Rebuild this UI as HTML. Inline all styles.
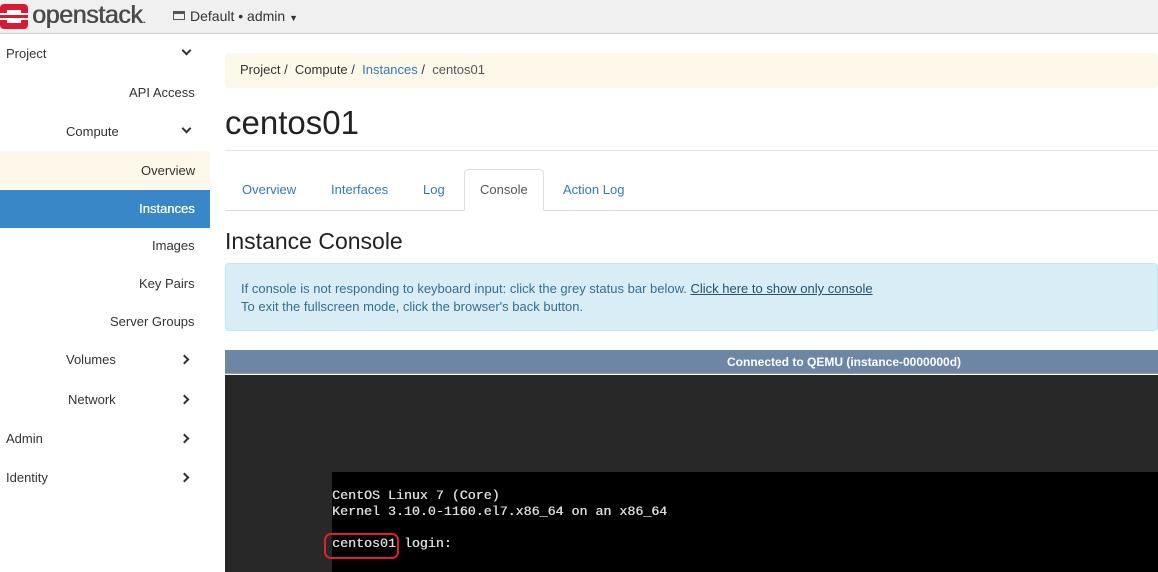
<!DOCTYPE html>
<html><head><style>
*{margin:0;padding:0;box-sizing:border-box}
body{width:1158px;height:572px;overflow:hidden;background:#fff;font-family:"Liberation Sans",sans-serif;font-size:13px;color:#333;position:relative}
.hdr{position:absolute;left:0;top:0;width:1158px;height:34px;background:#f0f0f0;border-bottom:1px solid #ccc}
.abs{position:absolute;white-space:nowrap}
.side .abs{font-size:13px;color:#333}
.chev{position:absolute;width:7px;height:7px;border-right:2px solid #333;border-bottom:2px solid #333}
a{color:#337ab7;text-decoration:none}
.mono{font-family:"Liberation Mono",monospace;font-size:13.3px;color:#dcdcdc;line-height:16px;text-shadow:0.4px 0 0 #dcdcdc}
</style></head><body>
<div class="hdr">
 <svg class="abs" style="left:0;top:3px" width="28" height="26" viewBox="0 0 28 26"><rect x="0" y="1" width="28" height="25" rx="4" fill="#da1a32"/><rect x="7" y="7" width="14" height="13" fill="#fff"/><rect x="0" y="10" width="7" height="2" fill="#fff"/><rect x="0" y="15" width="7" height="2" fill="#fff"/><rect x="21" y="10" width="7" height="2" fill="#fff"/><rect x="21" y="15" width="7" height="2" fill="#fff"/><rect x="7" y="12" width="14" height="3" fill="#da1a32"/></svg>
 <div class="abs" style="left:32px;top:1px;font-size:25px;color:#4a4a4a;letter-spacing:-0.4px;text-shadow:0.6px 0 0 #4a4a4a">openstack<span style="font-size:12px">.</span></div>
 <div class="abs" style="left:173px;top:11px;width:12px;height:9px;border:1.5px solid #555;border-top-width:3px"></div>
 <div class="abs" style="left:190px;top:8px;font-size:14px;color:#333">Default • admin <span style="font-size:9px">▼</span></div>
</div>
<div class="side">
 <div class="abs" style="left:6px;top:46px">Project</div><div class="chev" style="left:183px;top:47px;transform:rotate(45deg)"></div>
 <div class="abs" style="left:129px;top:85px">API Access</div>
 <div class="abs" style="left:66px;top:124px">Compute</div><div class="chev" style="left:183px;top:125px;transform:rotate(45deg)"></div>
 <div class="abs" style="left:0;top:151px;width:210px;height:38px;background:#fdf8ea"></div>
 <div class="abs" style="left:141px;top:163px">Overview</div>
 <div class="abs" style="left:0;top:190px;width:210px;height:38px;background:#3a87c7"></div>
 <div class="abs" style="left:139px;top:201px;color:#fff;text-shadow:0.3px 0 0 #fff">Instances</div>
 <div class="abs" style="left:152px;top:238px">Images</div>
 <div class="abs" style="left:139px;top:276px">Key Pairs</div>
 <div class="abs" style="left:110px;top:314px">Server Groups</div>
 <div class="abs" style="left:66px;top:352px">Volumes</div><div class="chev" style="left:181px;top:356px;transform:rotate(-45deg)"></div>
 <div class="abs" style="left:68px;top:392px">Network</div><div class="chev" style="left:181px;top:396px;transform:rotate(-45deg)"></div>
 <div class="abs" style="left:6px;top:431px">Admin</div><div class="chev" style="left:181px;top:435px;transform:rotate(-45deg)"></div>
 <div class="abs" style="left:6px;top:470px">Identity</div><div class="chev" style="left:181px;top:474px;transform:rotate(-45deg)"></div>
</div>
<div class="abs" style="left:225px;top:53px;width:933px;height:35px;background:#fdf8ea;border-radius:4px"></div>
<div class="abs" style="left:240px;top:62px;font-size:13px">Project /&nbsp; Compute /&nbsp; <a>Instances</a> /&nbsp; <span style="color:#555">centos01</span></div>
<div class="abs" style="left:225px;top:104px;font-size:33px;color:#222">centos01</div>
<div class="abs" style="left:225px;top:150px;width:933px;height:1px;background:#e5e5e5"></div>
<div class="abs" style="left:225px;top:210px;width:933px;height:1px;background:#ddd"></div>
<div class="abs" style="left:464px;top:169px;width:80px;height:42px;background:#fff;border:1px solid #ddd;border-bottom-color:#fff;border-radius:4px 4px 0 0"></div>
<div class="abs" style="left:242px;top:182px"><a>Overview</a></div>
<div class="abs" style="left:331px;top:182px"><a>Interfaces</a></div>
<div class="abs" style="left:423px;top:182px"><a>Log</a></div>
<div class="abs" style="left:480px;top:182px;color:#555">Console</div>
<div class="abs" style="left:563px;top:182px"><a>Action Log</a></div>
<div class="abs" style="left:225px;top:228px;font-size:23px;color:#222">Instance Console</div>
<div class="abs" style="left:225px;top:263px;width:933px;height:68px;background:#d9edf7;border:1px solid #bce8f1;border-radius:4px"></div>
<div class="abs" style="left:241px;top:280px;color:#31708f;line-height:18px">If console is not responding to keyboard input: click the grey status bar below. <a style="color:#245269;text-decoration:underline">Click here to show only console</a><br>To exit the fullscreen mode, click the browser's back button.</div>
<div class="abs" style="left:225px;top:350px;width:933px;height:24px;background:#6e86a6;border-bottom:1px solid #999"></div>
<div class="abs" style="left:727px;top:355px;color:#fff;font-weight:bold;font-size:12px">Connected to QEMU (instance-0000000d)</div>
<div class="abs" style="left:225px;top:375px;width:933px;height:197px;background:#282828"></div>
<div class="abs" style="left:332px;top:472px;width:826px;height:100px;background:#000"></div>
<div class="abs mono" style="left:332px;top:488px">CentOS Linux 7 (Core)<br>Kernel 3.10.0-1160.el7.x86_64 on an x86_64<br><br>centos01 login:</div>
<div class="abs" style="left:324px;top:533px;width:75px;height:26px;border:2px solid #e0202a;border-radius:7px"></div>
</body></html>
